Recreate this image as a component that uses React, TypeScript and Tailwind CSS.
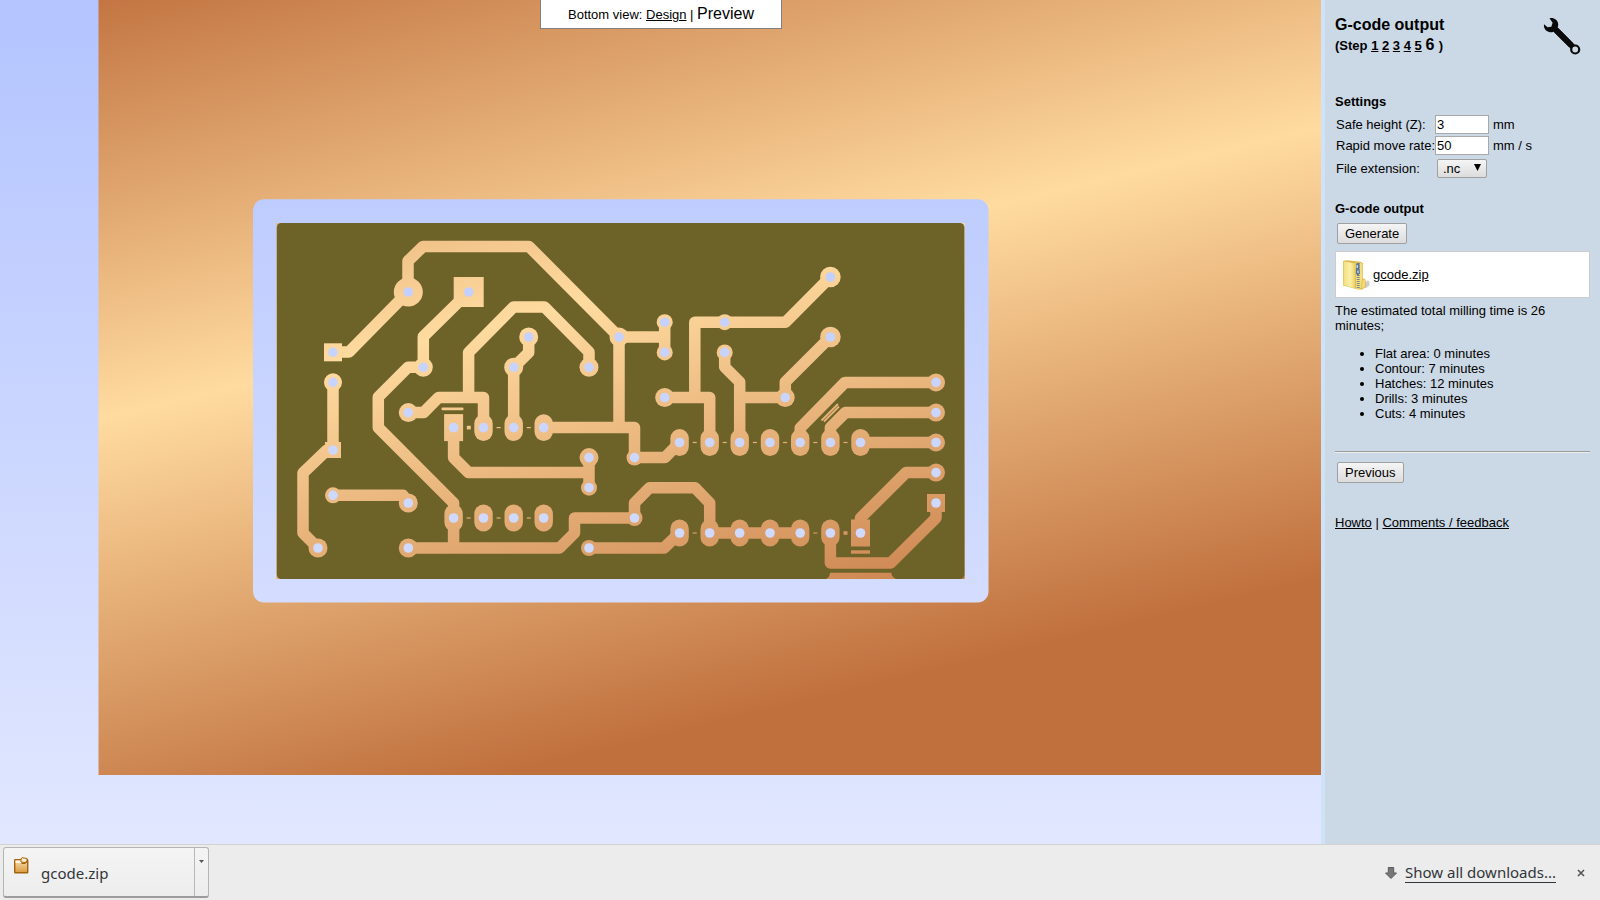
import React from "react";

type Point = [number, number];

const tracks: string[] = [
  "M333 352H349L408 292V261L423 246.500H529L619 337H664.700",
  "M664.700 322V352",
  "M619 337V427.600",
  "M543.700 427.600H634.500V457.600H665L679.600 442.500",
  "M468.700 292L423.300 336.700V367.300H408L378.300 397V427.600L453.600 503V548",
  "M408.300 548H559.500L574.500 533V518H634.500",
  "M468.600 397.500V352.500L513.500 307H544.500L589 352V367.300",
  "M408.300 412.600H423.500L438.500 397.500H483.500V427.600",
  "M528.700 337V352.500L513.700 367.300V427.600",
  "M333 382.300V450H327L303 473V533L318 548",
  "M333 495.300H403L408.300 503",
  "M453.600 427.600V457.600L468.600 472.600H589",
  "M589 457.600V487.700",
  "M634.500 518V503L649.500 487.700H695L709.700 503V533",
  "M589 548H664L679.600 533",
  "M664.700 397.500H709.700V442.500",
  "M694.800 397.500V322.300H785.500L830.400 277",
  "M724.700 352.300V367L739.700 382V442.500",
  "M739.700 397.500H785.300V382L830.400 337",
  "M800.200 442.500V428L845 382.400H936",
  "M830.400 442.500V427.500L845.300 412.600H936",
  "M860.500 442.500H936",
  "M936 472.600H906L860.500 518V533",
  "M936 503V518L890.700 563H830.400V533",
  "M709.700 533H800.200",
];

const roundPads: { r: number; at: Point[] }[] = [
  { r: 14.5, at: [[408.3, 292]] },
  { r: 10.3, at: [[830.4, 277], [830.4, 337]] },
  {
    r: 9.5,
    at: [
      [408.3, 412.6], [408.3, 503], [408.3, 548], [318, 548], [423.3, 367.3], [528.7, 337],
      [513.7, 367.3], [589, 367.3], [589, 457.6], [619, 337], [664.7, 397.5], [785.2, 397.5],
    ],
  },
  { r: 9, at: [[333, 382.3], [936, 382.4], [936, 412.6], [936, 442.5], [936, 472.6]] },
  {
    r: 8,
    at: [
      [333, 495.3], [664.7, 322.2], [664.7, 352.4], [724.7, 322.2], [724.7, 352.4],
      [634.5, 457.6], [634.5, 518], [589, 487.7], [589, 548],
    ],
  },
];

const ovalPads: Point[] = [
  [483.5, 427.6], [513.7, 427.6], [543.7, 427.6],
  [453.6, 518], [483.5, 518], [513.7, 518], [543.7, 518],
  [679.6, 442.5], [709.7, 442.5], [739.7, 442.5], [770, 442.5], [800.2, 442.5], [830.4, 442.5], [860.5, 442.5],
  [679.6, 533], [709.7, 533], [739.7, 533], [770, 533], [800.2, 533], [830.4, 533],
];

const rectPads: { at: Point; w: number; h: number }[] = [
  { at: [468.7, 292], w: 30, h: 30 },
  { at: [333, 352.3], w: 18, h: 18 },
  { at: [333, 450], w: 16, h: 16 },
  { at: [453.6, 427.6], w: 19, h: 27 },
  { at: [860.5, 533], w: 19, h: 27 },
  { at: [936, 503], w: 18, h: 18 },
];

const dashes: Point[] = [
  [498.6, 427.6], [528.8, 427.6],
  [468.6, 518], [498.6, 518], [528.8, 518],
  [694.7, 442.5], [724.7, 442.5], [754.9, 442.5], [785.1, 442.5], [815.3, 442.5], [845.5, 442.5],
  [694.7, 533], [815.3, 533],
];

const holes: Point[] = [
  ...roundPads.flatMap((group) => group.at),
  ...ovalPads,
  ...rectPads.map((pad) => pad.at),
];

function BoardPreview() {
  return (
    <svg
      className="absolute inset-0 h-full w-full"
      viewBox="0 0 1321 844"
      preserveAspectRatio="xMinYMin slice"
      role="img"
      aria-label="Circuit board preview"
    >
      <defs>
        <linearGradient id="backdrop" gradientUnits="userSpaceOnUse" x1="0" y1="0" x2="0" y2="844">
          <stop offset="0" stopColor="#b3c4ff" />
          <stop offset="1" stopColor="#e1e7ff" />
        </linearGradient>
        <linearGradient id="copper" gradientUnits="userSpaceOnUse" x1="0" y1="0" x2="202" y2="846">
          <stop offset="0" stopColor="#c0703d" />
          <stop offset="0.495" stopColor="#ffdba0" />
          <stop offset="1" stopColor="#c0703d" />
        </linearGradient>
      </defs>
      <rect width="1321" height="844" fill="url(#backdrop)" />
      <rect x="98.500" y="-5" width="1222.500" height="780" fill="url(#copper)" />
      <rect x="253" y="199.300" width="735.500" height="403.200" rx="11" fill="url(#backdrop)" />
      <rect x="276.400" y="223" width="688.400" height="356" fill="url(#copper)" />
      <rect x="276.800" y="223" width="687.600" height="356" rx="4.500" fill="#6d6329" />
      <g fill="none" stroke="url(#copper)" strokeWidth="11.500" strokeLinejoin="round">
        {tracks.map((d) => (
          <path key={d} d={d} />
        ))}
      </g>
      <g fill="url(#copper)">
        {roundPads.map((group) =>
          group.at.map(([x, y]) => <circle key={`${x},${y}`} cx={x} cy={y} r={group.r} />),
        )}
        {ovalPads.map(([x, y]) => (
          <rect key={`${x},${y}`} x={x - 9.2} y={y - 13.4} width="18.400" height="26.800" rx="9.200" />
        ))}
        {rectPads.map(({ at: [x, y], w, h }) => (
          <rect key={`${x},${y}`} x={x - w / 2} y={y - h / 2} width={w} height={h} />
        ))}
        {dashes.map(([x, y]) => (
          <rect key={`${x},${y}`} x={x - 2} y={y - 0.6} width="4" height="1.200" />
        ))}
        <rect x="466.800" y="425.800" width="4" height="3.600" />
        <rect x="843.500" y="531.200" width="4" height="3.600" />
        <rect x="441.500" y="407.400" width="22" height="2.800" rx="1" />
        <rect x="851" y="550.300" width="19" height="3.400" />
        <path d="M830 572.700H891.300Q892 577.500 896 579H826Q830 577 830 572.700Z" />
      </g>
      <g stroke="url(#copper)" strokeWidth="1.800">
        <path d="M821.500 420.500L838 404" />
        <path d="M824 421.500L839 406.500" />
      </g>
      <g fill="url(#backdrop)">
        {holes.map(([x, y]) => (
          <circle key={`${x},${y}`} cx={x} cy={y} r="4.800" />
        ))}
      </g>
    </svg>
  );
}

function WrenchIcon() {
  return (
    <svg className="h-10 w-10" viewBox="0 0 40 40" aria-hidden="true">
      <path
        d="M7.500 2.200C11.500 1.200 16 3.800 16.200 8.200C16.300 9.600 15.900 10.600 15.700 11.500L31.200 27.200L27.200 31.200L11.600 15.700C10.400 16.200 9.200 16.400 8 16.200C4 15.700 1.300 12.200 2 8.300L5.600 11.200L9.300 10.700L10.600 6.700Z"
        fill="#0a0a0a"
      />
      <path d="M14 14L31 31" stroke="#0a0a0a" strokeWidth="5.800" />
      <circle cx="33.200" cy="33.500" r="4" fill="#cbd8e5" stroke="#0a0a0a" strokeWidth="2.200" />
    </svg>
  );
}

function ZipFolderIcon() {
  return (
    <svg className="h-8 w-8" viewBox="0 0 32 32" aria-hidden="true">
      <defs>
        <linearGradient id="folder" x1="0" x2="1" y1="0" y2="0">
          <stop offset="0" stopColor="#f3e07e" />
          <stop offset="0.600" stopColor="#fbf0a8" />
          <stop offset="1" stopColor="#eccf62" />
        </linearGradient>
      </defs>
      <path d="M18 30.500L27 21Q31 25 26 28.500Z" fill="#b9b9b9" opacity="0.700" />
      <path d="M2 2L5 1.300L18 2.500L22 4V30L17 30.500L2 26.500Z" fill="#dcb94c" />
      <path d="M2.500 2.300L14 4.500V29.500L2.500 26Z" fill="url(#folder)" />
      <path d="M14.500 3.500L21.500 4.500V29L15 30Z" fill="#f5de7c" />
      <path d="M21.500 20Q24.500 19 24.500 22V28L20 30.500Z" fill="#f3da73" stroke="#d2b04a" strokeWidth="0.600" />
      <path d="M17.200 4V30" stroke="#7b8791" strokeWidth="3" strokeDasharray="1 1" />
      <path d="M15.200 4.500H18.500V10L19 14L17 17L14.800 14.500Z" fill="#5a7699" />
      <path d="M16.200 6V9M17 11.500V14" stroke="#dbe8f4" strokeWidth="1.200" />
    </svg>
  );
}

function PackageIcon() {
  return (
    <svg className="h-[17px] w-[15px] shrink-0" viewBox="0 0 15 17" aria-hidden="true">
      <defs>
        <linearGradient id="package" x1="0" y1="0" x2="0" y2="1">
          <stop offset="0" stopColor="#f6e0b8" />
          <stop offset="1" stopColor="#dc9a3e" />
        </linearGradient>
      </defs>
      <rect x="0.700" y="2.700" width="13" height="13" rx="0.500" fill="url(#package)" stroke="#a3630c" strokeWidth="1.400" />
      <path d="M1.500 3.500H7V6H1.500Z" fill="#fff6e4" />
      <path d="M7 2L8 0.700L13 1.500V4.500L11 5.500L7 5Z" fill="#fbeed5" stroke="#a3630c" />
      <path d="M7.500 6.500H11L13 5" fill="none" stroke="#a3630c" />
    </svg>
  );
}

const raised =
  "rounded-[2px] border border-[#a0a0a0] bg-linear-to-b from-[#f5f5f5] to-[#dcdcdc] text-[13px] leading-[15px]";

function Sidebar() {
  const times = [
    "Flat area: 0 minutes",
    "Contour: 7 minutes",
    "Hatches: 12 minutes",
    "Drills: 3 minutes",
    "Cuts: 4 minutes",
  ];
  return (
    <aside className="w-[279px] shrink-0 overflow-hidden border-l-4 border-[#d0e2f8] bg-[#cbd8e5] px-[10px] pt-[15px]">
      <header className="flex h-[79px] justify-between">
        <div className="font-bold">
          <h1 className="text-base leading-5">G-code output</h1>
          <p className="leading-[22px]">
            (Step{" "}
            {[1, 2, 3, 4, 5].map((step) => (
              <React.Fragment key={step}>
                <a href={`#step-${step}`} className="underline">
                  {step}
                </a>{" "}
              </React.Fragment>
            ))}
            <span className="text-base leading-none">6 </span>)
          </p>
        </div>
        <div className="pt-px pr-2">
          <WrenchIcon />
        </div>
      </header>

      <section>
        <h2 className="font-bold">Settings</h2>
        <div className="mt-[6px] grid grid-cols-[99px_54px_1fr] items-center gap-x-[1px] gap-y-[2px]">
          <label htmlFor="safe-height" className="pl-px whitespace-nowrap">Safe height (Z):</label>
          <input id="safe-height" defaultValue="3" className="h-[19px] w-full border border-[#a9a9a9] bg-white px-px" />
          <span className="pl-[3px]">mm</span>
          <label htmlFor="move-rate" className="pl-px whitespace-nowrap">Rapid move rate:</label>
          <input id="move-rate" defaultValue="50" className="h-[19px] w-full border border-[#a9a9a9] bg-white px-px" />
          <span className="pl-[3px]">mm / s</span>
          <label htmlFor="extension" className="pl-px whitespace-nowrap">File extension:</label>
          <div className="relative my-[2px] ml-[2px] h-[19px] w-[50px]">
            <select id="extension" className={`${raised} h-full w-full appearance-none pl-[5px]`}>
              <option>.nc</option>
            </select>
            <svg className="pointer-events-none absolute top-[5px] right-[6px] h-[7px] w-[7px]" viewBox="0 0 7 7" aria-hidden="true">
              <path d="M0 0H7L3.500 7Z" fill="#000" />
            </svg>
          </div>
        </div>
      </section>

      <section className="mt-[21px]">
        <h2 className="font-bold">G-code output</h2>
        <button type="button" className={`${raised} mt-[7px] ml-[2px] block h-[21px] px-[7px]`}>
          Generate
        </button>
        <div className="mt-[7px] flex h-[47px] items-center border border-[#cccccc] bg-white pl-[5px]">
          <ZipFolderIcon />
          <a href="#gcode.zip" className="underline">gcode.zip</a>
        </div>
        <p className="mt-[5px]">The estimated total milling time is 26 minutes;</p>
        <ul className="mt-[13px] list-disc pl-10">
          {times.map((time) => (
            <li key={time}>{time}</li>
          ))}
        </ul>
      </section>

      <hr className="mt-[30px] border-t border-b border-t-[#9a9a9a] border-b-[#eeeeee]" />
      <button type="button" className={`${raised} mt-[9px] ml-[2px] block h-[21px] px-[7px]`}>
        Previous
      </button>
      <p className="mt-8">
        <a href="#howto" className="underline">Howto</a> |{" "}
        <a href="#feedback" className="underline">Comments / feedback</a>
      </p>
    </aside>
  );
}

function DownloadBar() {
  return (
    <footer className="flex h-14 shrink-0 items-center justify-between border-t border-[#d2d2d2] bg-[#ececec] pr-[14px] pl-[3px] font-['Noto_Sans',sans-serif] text-[15px] leading-6 text-[#31363a]">
      <div className="flex h-[51px] w-[206px] rounded-[3px] border border-b-2 border-[#b4b4b4] border-b-[#9c9c9c] bg-linear-to-b from-[#f4f4f4] to-[#ededed]">
        <button type="button" className="flex flex-1 items-start gap-3 pt-[9px] pl-[10px] text-left">
          <PackageIcon />
          <span className="pt-1">gcode.zip</span>
        </button>
        <button type="button" aria-label="Download options" className="flex w-[14px] items-start justify-center border-l border-[#b8b8b8] pt-3">
          <svg className="h-[3px] w-[5px]" viewBox="0 0 5 3" aria-hidden="true">
            <path d="M0 0H5L2.500 3Z" fill="#555" />
          </svg>
        </button>
      </div>
      <div className="flex items-center">
        <svg className="mr-2 h-3 w-3" viewBox="0 0 12 12" aria-hidden="true">
          <path d="M3.300 0.500H8.700V6H11.500L6 11.500L0.500 6H3.300Z" fill="#777" stroke="#5a5a5a" />
        </svg>
        <a href="#downloads" className="border-b border-[#31363a] leading-5">Show all downloads...</a>
        <button type="button" aria-label="Close" className="ml-5 p-px">
          <svg className="h-[8px] w-[8px]" viewBox="0 0 8 8" aria-hidden="true">
            <path d="M1 1L7 7M7 1L1 7" stroke="#555" strokeWidth="1.600" />
          </svg>
        </button>
      </div>
    </footer>
  );
}

export default function App() {
  return (
    <div className="flex h-screen flex-col font-['Liberation_Sans',Arial,sans-serif] text-[13px] leading-[15px] text-black">
      <div className="flex min-h-0 flex-1">
        <main className="relative min-w-0 flex-1 overflow-hidden bg-[#e1e7ff]">
          <BoardPreview />
          <nav className="absolute inset-x-0 top-0 flex justify-center pl-px">
            <p className="h-[29px] w-[242px] border border-t-0 border-[#808080] bg-white text-center leading-[29px]">
              Bottom view: <a href="#design" className="underline">Design</a> |{" "}
              <span className="text-base leading-none">Preview</span>
            </p>
          </nav>
        </main>
        <Sidebar />
      </div>
      <DownloadBar />
    </div>
  );
}
